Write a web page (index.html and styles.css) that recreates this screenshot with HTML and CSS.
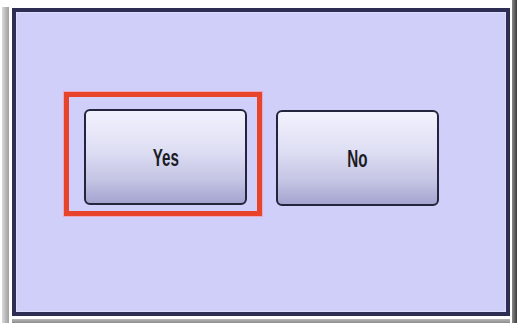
FILE: index.html
```html
<!DOCTYPE html>
<html>
<head>
<meta charset="utf-8">
<link rel="stylesheet" href="styles.css">
</head>
<body>
<div class="device">
  <div class="bar-left"></div>
  <div class="main">
    <div class="frame">
      <div class="choices">
        <div class="highlight">
          <div class="btn"><span class="label">Yes</span></div>
        </div>
        <div class="btn btn-no"><span class="label">No</span></div>
      </div>
    </div>
    <div class="foot"></div>
  </div>
  <div class="bar-right"></div>
</div>
</body>
</html>
```
FILE: styles.css
```css
html, body {
  margin: 0;
  padding: 0;
  background: #ffffff;
}
body {
  width: 517px;
  height: 323px;
  overflow: hidden;
  font-family: "Liberation Sans", Arial, sans-serif;
}
.device {
  display: flex;
  height: 323px;
}
.bar-left {
  width: 7px;
  margin: 7px 3px 0 2px;
  background: linear-gradient(90deg, #dadada, #b4b4b4 60%, #a0a0a0);
}
.main {
  display: flex;
  flex-direction: column;
  width: 498px;
}
.frame {
  box-sizing: border-box;
  margin-top: 8px;
  width: 498px;
  height: 308px;
  border: 4px solid #2e2d54;
  background: #cfcff9;
  box-shadow: inset 0 0 0 1px #dcdcfb;
  padding: 80px 0 0 48px;
}
.foot {
  margin-top: 3px;
  height: 4px;
  background: linear-gradient(#b8b8b8, #8c8c8c);
}
.bar-right {
  width: 5px;
  margin-left: 2px;
  background: linear-gradient(90deg, #8a8a8a, #3c3c3c);
}
.choices {
  display: flex;
  align-items: flex-start;
}
.highlight {
  border: 5px solid #e8442c;
  padding: 12px 10px 6px 15px;
  box-shadow: 0 0 0 1px #e9a9c0;
}
.btn {
  box-sizing: border-box;
  width: 163px;
  height: 96px;
  border: 2px solid #24243c;
  border-radius: 6px;
  background: linear-gradient(#f1f1fd 0%, #e0e0f5 40%, #c4c4e4 75%, #a4a4d0 100%);
  display: flex;
  align-items: center;
  justify-content: center;
}
.btn-no {
  margin: 18px 0 0 14px;
}
.label {
  display: inline-block;
  font-weight: bold;
  font-size: 23px;
  color: #1c1c24;
  transform: scaleX(0.66);
  margin-top: 2px;
}
```
